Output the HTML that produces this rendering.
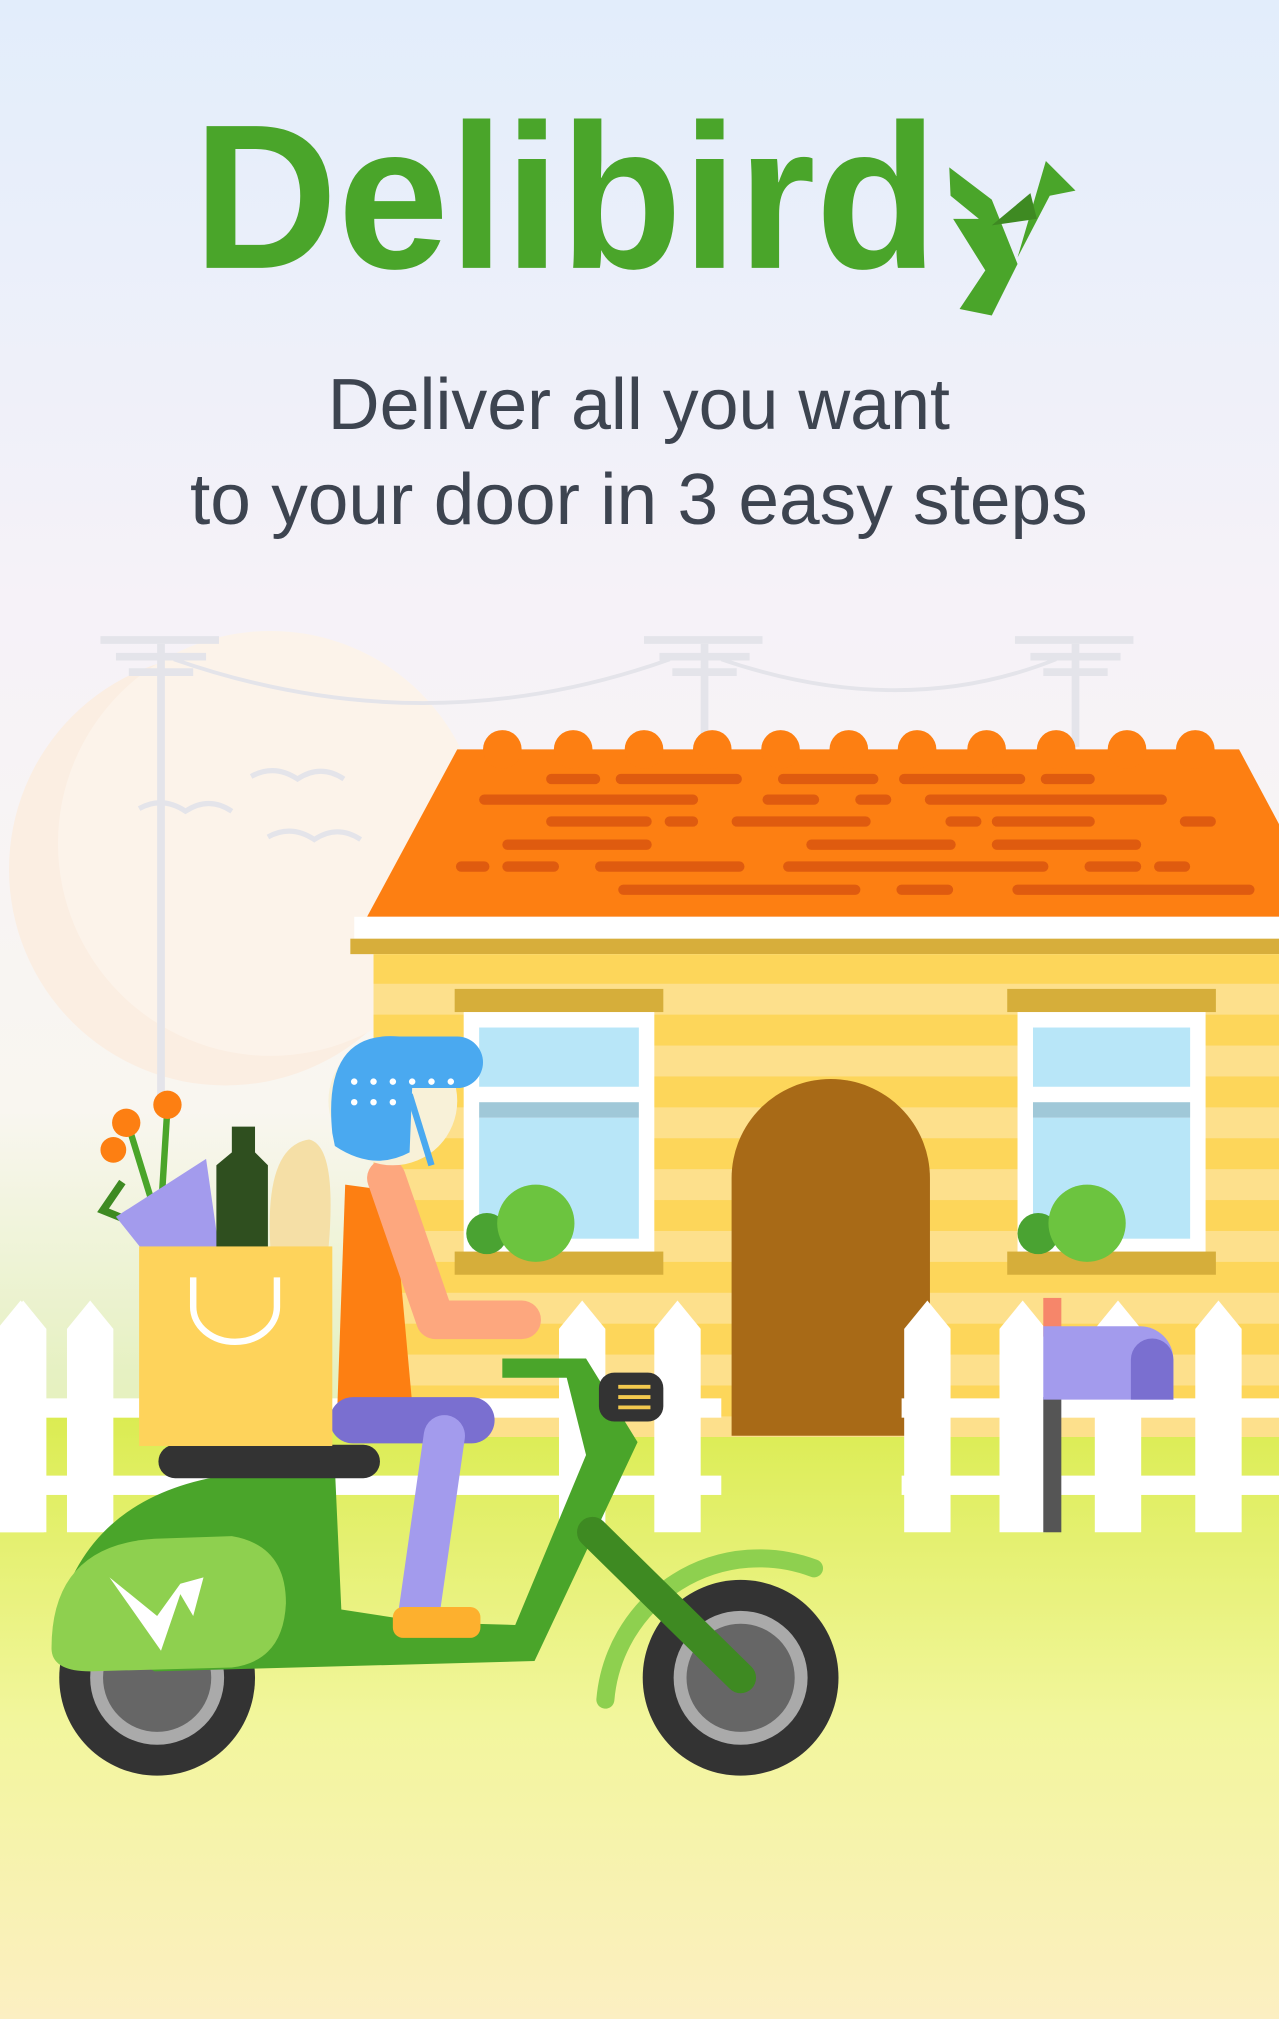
<!DOCTYPE html>
<html><head><meta charset="utf-8"><style>html,body{margin:0;padding:0;width:1279px;height:2019px;overflow:hidden}svg{display:block}</style></head><body>
<svg width="1279" height="2019" viewBox="0 0 993 1568" preserveAspectRatio="none" xmlns="http://www.w3.org/2000/svg">
<defs>
<linearGradient id="sky" x1="0" y1="0" x2="0" y2="1">
<stop offset="0" stop-color="#e2edfb"/><stop offset="0.3" stop-color="#f6f2f8"/><stop offset="0.55" stop-color="#f9f6f0"/><stop offset="0.68" stop-color="#e6f1c2"/><stop offset="1" stop-color="#dfee7a"/>
</linearGradient>
<linearGradient id="ground" x1="0" y1="0" x2="0" y2="1">
<stop offset="0" stop-color="#dbec52"/><stop offset="0.5" stop-color="#f2f69c"/><stop offset="1" stop-color="#fcefc2"/>
</linearGradient>
<pattern id="stripes" x="0" y="740" width="10" height="48" patternUnits="userSpaceOnUse">
<rect width="10" height="24" fill="#fdd65a"/><rect y="24" width="10" height="24" fill="#fde08c"/>
</pattern>
</defs>
<rect width="993" height="1568" fill="url(#sky)"/>
<rect y="1100" width="993" height="468" fill="url(#ground)"/>
<circle cx="175" cy="675" r="168" fill="#fbeee2"/>
<circle cx="210" cy="655" r="165" fill="#fcf3ea"/>
<g stroke="#e4e4ea" stroke-width="6" fill="none">
<line x1="125" y1="500" x2="125" y2="860"/><line x1="547" y1="500" x2="547" y2="580"/><line x1="835" y1="500" x2="835" y2="580"/>
<line x1="78" y1="497" x2="170" y2="497"/><line x1="90" y1="510" x2="160" y2="510"/><line x1="100" y1="522" x2="150" y2="522"/>
<line x1="500" y1="497" x2="592" y2="497"/><line x1="512" y1="510" x2="582" y2="510"/><line x1="522" y1="522" x2="572" y2="522"/>
<line x1="788" y1="497" x2="880" y2="497"/><line x1="800" y1="510" x2="870" y2="510"/><line x1="810" y1="522" x2="860" y2="522"/>
<path d="M135 512 Q330 580 520 512" stroke-width="3"/><path d="M560 512 Q700 560 820 512" stroke-width="3"/>
<path d="M195 603 q18 -10 36 2 q18 -12 36 0" stroke-width="4"/><path d="M108 628 q18 -10 36 2 q18 -12 36 0" stroke-width="4"/><path d="M208 650 q18 -10 36 2 q18 -12 36 0" stroke-width="4"/>
</g>
<g fill="#fd7f12">
<polygon points="285,712 355,582 962,582 993,640 993,712"/>
<circle cx="390" cy="582" r="15"/><circle cx="445" cy="582" r="15"/><circle cx="500" cy="582" r="15"/><circle cx="553" cy="582" r="15"/><circle cx="606" cy="582" r="15"/><circle cx="659" cy="582" r="15"/><circle cx="712" cy="582" r="15"/><circle cx="766" cy="582" r="15"/><circle cx="820" cy="582" r="15"/><circle cx="875" cy="582" r="15"/><circle cx="928" cy="582" r="15"/>
</g>
<g stroke="#df5b0f" stroke-width="8" stroke-linecap="round">
<line x1="428" y1="605" x2="462" y2="605"/><line x1="482" y1="605" x2="572" y2="605"/><line x1="608" y1="605" x2="678" y2="605"/><line x1="702" y1="605" x2="792" y2="605"/><line x1="812" y1="605" x2="846" y2="605"/>
<line x1="376" y1="621" x2="538" y2="621"/><line x1="596" y1="621" x2="632" y2="621"/><line x1="668" y1="621" x2="688" y2="621"/><line x1="722" y1="621" x2="902" y2="621"/>
<line x1="428" y1="638" x2="502" y2="638"/><line x1="520" y1="638" x2="538" y2="638"/><line x1="572" y1="638" x2="672" y2="638"/><line x1="738" y1="638" x2="758" y2="638"/><line x1="774" y1="638" x2="846" y2="638"/><line x1="920" y1="638" x2="940" y2="638"/>
<line x1="394" y1="656" x2="502" y2="656"/><line x1="630" y1="656" x2="738" y2="656"/><line x1="774" y1="656" x2="882" y2="656"/>
<line x1="358" y1="673" x2="376" y2="673"/><line x1="394" y1="673" x2="430" y2="673"/><line x1="466" y1="673" x2="574" y2="673"/><line x1="612" y1="673" x2="810" y2="673"/><line x1="846" y1="673" x2="882" y2="673"/><line x1="900" y1="673" x2="920" y2="673"/>
<line x1="484" y1="691" x2="664" y2="691"/><line x1="700" y1="691" x2="736" y2="691"/><line x1="790" y1="691" x2="970" y2="691"/>
</g>
<rect x="275" y="712" width="718" height="17" fill="#fff"/>
<rect x="272" y="729" width="721" height="12" fill="#d7ae3b"/>
<rect x="290" y="741" width="703" height="375" fill="url(#stripes)"/>
<g>
<rect x="353" y="768" width="162" height="18" fill="#d6ae3a"/>
<rect x="360" y="786" width="148" height="188" fill="#fff"/>
<rect x="372" y="798" width="124" height="46" fill="#b8e6f8"/><rect x="372" y="868" width="124" height="94" fill="#b8e6f8"/>
<rect x="372" y="856" width="124" height="12" fill="#a0c8d8"/>
<rect x="353" y="972" width="162" height="18" fill="#d6ae3a"/>
<circle cx="378" cy="958" r="16" fill="#4aa332"/><circle cx="416" cy="950" r="30" fill="#6cc43f"/>
<rect x="782" y="768" width="162" height="18" fill="#d6ae3a"/>
<rect x="790" y="786" width="146" height="188" fill="#fff"/>
<rect x="802" y="798" width="122" height="46" fill="#b8e6f8"/><rect x="802" y="868" width="122" height="94" fill="#b8e6f8"/>
<rect x="802" y="856" width="122" height="12" fill="#a0c8d8"/>
<rect x="782" y="972" width="162" height="18" fill="#d6ae3a"/>
<circle cx="806" cy="958" r="16" fill="#4aa332"/><circle cx="844" cy="950" r="30" fill="#6cc43f"/>
</g>
<path d="M568 1115 V915 a77 77 0 0 1 154 0 V1115 Z" fill="#a86a17"/>
<g fill="#fff">
<rect x="0" y="1086" width="560" height="15"/><rect x="0" y="1146" width="560" height="15"/>
<rect x="700" y="1086" width="293" height="15"/><rect x="700" y="1146" width="293" height="15"/>
<path id="pk" d="M0 1190 V1032 L18 1010 L36 1032 V1190 Z"/>
<use href="#pk" x="-2"/><use href="#pk" x="52"/><use href="#pk" x="434"/><use href="#pk" x="508"/>
<use href="#pk" x="702"/><use href="#pk" x="776"/><use href="#pk" x="850"/><use href="#pk" x="928"/>
</g>
<rect x="810" y="1008" width="14" height="30" fill="#f6866a"/>
<rect x="810" y="1085" width="14" height="105" fill="#555"/>
<path d="M810 1030 H885 a26 26 0 0 1 26 26 V1087 H810 Z" fill="#a39bed"/>
<path d="M878 1087 V1056 a16 16 0 0 1 33 0 V1087 Z" fill="#7a6fd0"/>
<g>
<path d="M470 1320 A120 120 0 0 1 632 1218" stroke="#8ed04f" stroke-width="14" fill="none" stroke-linecap="round"/>
<circle cx="575" cy="1303" r="76" fill="#333"/><circle cx="575" cy="1303" r="52" fill="#aaa"/><circle cx="575" cy="1303" r="42" fill="#666"/>
<circle cx="122" cy="1303" r="76" fill="#333"/><circle cx="122" cy="1303" r="52" fill="#aaa"/><circle cx="122" cy="1303" r="42" fill="#666"/>
<path d="M390 1055 H455 L495 1120 L415 1290 L120 1298 L45 1255 Q70 1160 180 1145 L260 1140 L265 1250 L330 1260 L400 1262 L455 1130 L440 1070 H390 Z" fill="#4aa52a"/>
<path d="M40 1280 Q40 1200 120 1195 L180 1193 Q222 1200 222 1245 Q220 1290 180 1295 L70 1298 Q40 1298 40 1280 Z" fill="#8ed04f"/>
<path d="M85 1225 L125 1282 L140 1238 L150 1255 L158 1225 L140 1230 L122 1255 Z" fill="#fff"/>
<line x1="460" y1="1190" x2="575" y2="1303" stroke="#3e8a22" stroke-width="24" stroke-linecap="round"/>
<rect x="123" y="1122" width="172" height="26" rx="13" fill="#333"/>
<rect x="465" y="1066" width="50" height="38" rx="12" fill="#333"/>
<g stroke="#f3c94e" stroke-width="3"><line x1="480" y1="1077" x2="505" y2="1077"/><line x1="480" y1="1085" x2="505" y2="1085"/><line x1="480" y1="1093" x2="505" y2="1093"/></g>
</g>
<path d="M268 920 L262 1090 L320 1090 L305 925 Z" fill="#fd7f12"/>
<path d="M300 915 L338 1025 H405" stroke="#fda77e" stroke-width="30" fill="none" stroke-linecap="round" stroke-linejoin="round"/>
<rect x="256" y="1085" width="128" height="36" rx="18" fill="#7a6fd0"/>
<path d="M345 1115 L325 1255" stroke="#a39bed" stroke-width="32" stroke-linecap="round"/>
<rect x="305" y="1248" width="68" height="24" rx="8" fill="#fdb02e"/>
<circle cx="305" cy="855" r="50" fill="#f8f1d8"/>
<path d="M258 880 Q250 800 310 805 H355 a14 14 0 0 1 0 40 H320 L318 895 Q290 910 260 890 Z" fill="#4aa9f0"/>
<path d="M318 850 L335 905" stroke="#4aa9f0" stroke-width="5"/>
<g fill="#fff"><circle cx="275" cy="840" r="2.5"/><circle cx="290" cy="840" r="2.5"/><circle cx="305" cy="840" r="2.5"/><circle cx="320" cy="840" r="2.5"/><circle cx="335" cy="840" r="2.5"/><circle cx="350" cy="840" r="2.5"/><circle cx="275" cy="856" r="2.5"/><circle cx="290" cy="856" r="2.5"/><circle cx="305" cy="856" r="2.5"/></g>
<path d="M95 918 L80 940 L130 960" stroke="#3e8a22" stroke-width="6" fill="none"/>
<path d="M130 860 L125 940 M100 875 L120 940" stroke="#4aa52a" stroke-width="5"/>
<circle cx="98" cy="872" r="11" fill="#fd7f12"/><circle cx="130" cy="858" r="11" fill="#fd7f12"/><circle cx="88" cy="893" r="10" fill="#fd7f12"/>
<path d="M90 945 L160 900 L170 970 L110 970 Z" fill="#a39bed"/>
<path d="M168 970 V905 L180 895 V875 H198 V895 L208 905 V970 Z" fill="#2f4f1f"/>
<path d="M210 970 Q205 890 240 885 Q262 890 255 970 Z" fill="#f5dfa6"/>
<rect x="108" y="968" width="150" height="155" fill="#fed35b"/>
<path d="M150 992 V1015 a30 25 0 0 0 65 0 V992" stroke="#fff" stroke-width="5" fill="none"/>
<text x="150" y="208" font-family="Liberation Sans, sans-serif" font-weight="bold" font-size="160" fill="#4aa52a" textLength="578" lengthAdjust="spacingAndGlyphs">Delibird</text>
<path d="M737 130 L770 155 L790 205 L770 245 L745 240 L765 210 L740 170 L760 170 L738 152 Z" fill="#4aa52a"/>
<path d="M790 200 L812 125 L835 148 L815 152 Z" fill="#4aa52a"/>
<path d="M770 175 L800 150 L805 170 Z" fill="#3e8a22"/>
<text x="496" y="333" text-anchor="middle" font-family="Liberation Sans, sans-serif" font-size="56" fill="#3d4450" textLength="483" lengthAdjust="spacingAndGlyphs">Deliver all you want</text>
<text x="496" y="407" text-anchor="middle" font-family="Liberation Sans, sans-serif" font-size="56" fill="#3d4450" textLength="697" lengthAdjust="spacingAndGlyphs">to your door in 3 easy steps</text>
</svg>
</body></html>
